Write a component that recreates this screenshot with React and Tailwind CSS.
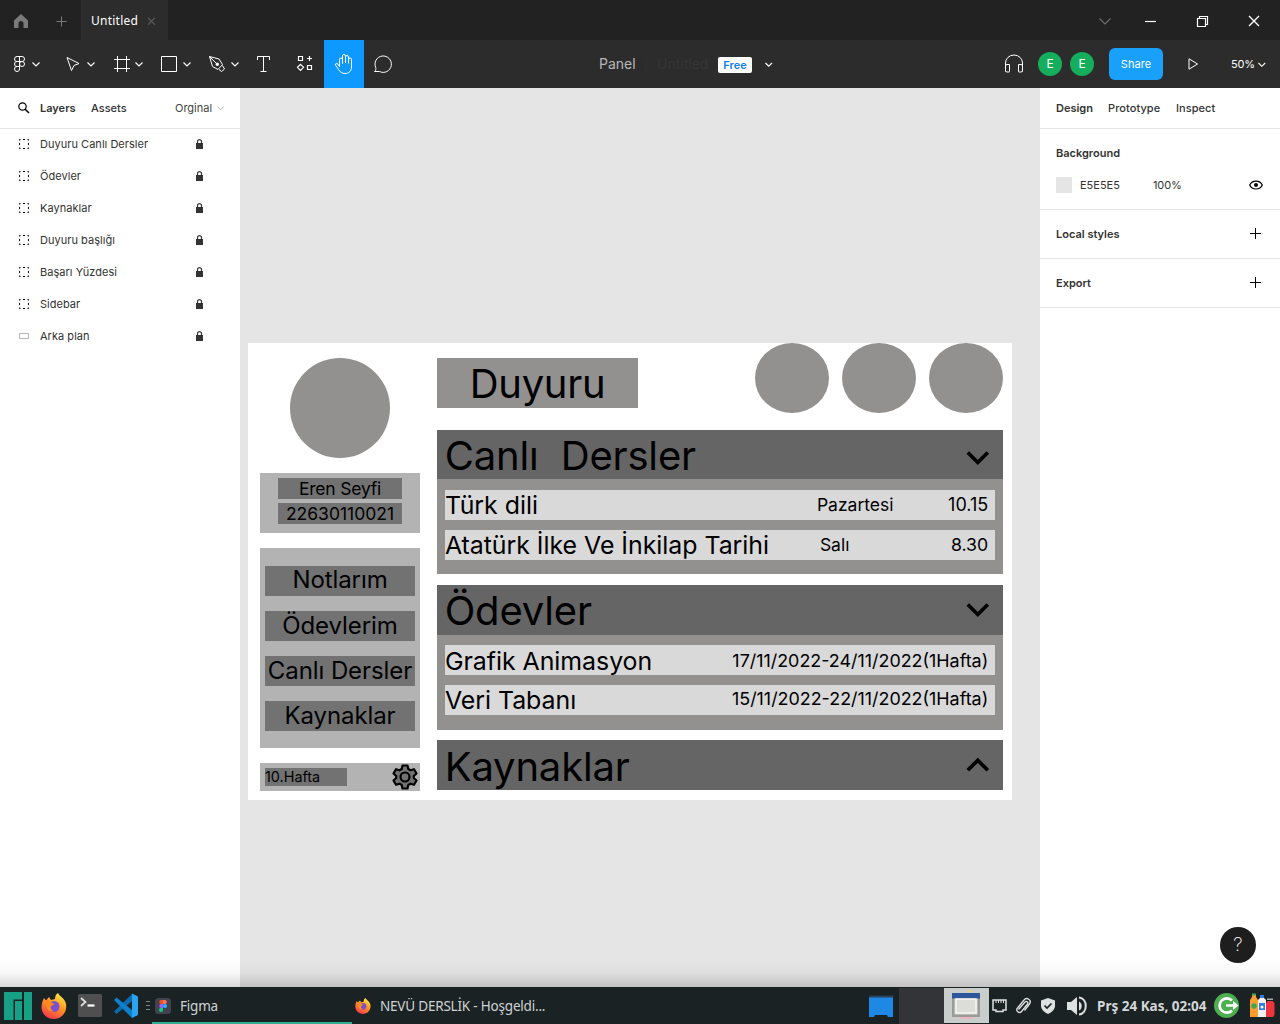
const inter = "font-['Inter','Noto_Sans',sans-serif]";
const noto = "font-['Noto_Sans',sans-serif]";

function Icon({ w, h, className = "", children, stroke = "#fff", sw = 1 }) {
  return (
    <svg width={w} height={h} viewBox={`0 0 ${w} ${h}`} fill="none" stroke={stroke} strokeWidth={sw} className={`block shrink-0 ${className}`}>
      {children}
    </svg>
  );
}

function TitleBar() {
  return (
    <div className={`flex h-10 bg-[#222222] ${noto}`}>
      <div className="flex w-[81px]">
        <Icon w={81} h={40} stroke="none">
          <path d="M21 14l7 6.5V28h-4.500v-4.500a2.500 2.500 0 0 0-5 0V28H14v-7.500z" fill="#7b7b7b" />
          <path d="M61.500 16.500v10M56.500 21.500h10" stroke="#7b7b7b" />
        </Icon>
      </div>
      <div className="flex w-[87px] items-center bg-[#2c2c2c] pl-[10px]">
        <span className="mt-px w-[56px] text-[12px] leading-4 tracking-[0.25px] text-white">Untitled</span>
        <Icon w={9} h={9} className="mt-[2px]" stroke="#575757" sw={1.3}><path d="M1 .7l7 7M8 .7l-7 7" /></Icon>
      </div>
      <div className="flex-1" />
      <Icon w={200} h={40} sw={1.2}>
        <path d="M19.500 18.500l5.500 5.500 5.500-5.500" stroke="#6e6e6e" strokeWidth="1.200" />
        <path d="M65 21.500h11" />
        <path d="M117.500 18.500h8v8h-8zM119.500 18.500v-2h8v8h-2" />
        <path d="M169 16l10 10M179 16l-10 10" strokeWidth="1.400" />
      </Icon>
    </div>
  );
}

const chev = (x) => <path d={`M${x - 3.5} 62.500l3.500 3.500 3.500-3.500`} strokeWidth="1.100" />;

function Tool({ x, w, active, children }) {
  return (
    <button className={`block h-12 shrink-0 ${active ? "bg-[#0d99ff]" : ""}`}>
      <svg width={w} height="48" viewBox={`${x} 40 ${w} 48`} fill="none" stroke="#fff" className="block">{children}</svg>
    </button>
  );
}

function Toolbar() {
  return (
    <div className={`flex h-12 items-center bg-[#2c2c2c] text-white ${inter}`}>
      <div className="flex w-[599px]">
        <Tool x={0} w={52}>
          <path d="M19.500 56.500h-2.500a2.500 2.500 0 0 0 0 5h2.500zM19.500 56.500h2.500a2.500 2.500 0 0 1 0 5h-2.500zM19.500 61.500h-2.500a2.500 2.500 0 0 0 0 5h2.500zM19.500 66.500h-2.500a2.500 2.500 0 1 0 2.500 2.500z" />
          <circle cx="22" cy="64" r="2.500" />
          {chev(36)}
        </Tool>
        <Tool x={52} w={48}>
          <path d="M67 57.500l4.500 13 2.500-5 5-2z" strokeLinejoin="round" />
          {chev(91)}
        </Tool>
        <Tool x={100} w={48}>
          <path d="M117.500 56v16M126.500 56v16M114 59.500h16M114 68.500h16" />
          {chev(139)}
        </Tool>
        <Tool x={148} w={48}>
          <path d="M161.500 56.500h15v15h-15z" />
          {chev(187)}
        </Tool>
        <Tool x={196} w={48}>
          <path d="M209.500 56.500l9.500 2.500 3.500 5.500-4.500 5-5.500-3zM209.500 56.500l7 7M219 69.500l2.500 2 3-2.500-2-3.500" strokeLinejoin="round" />
          <circle cx="217.300" cy="64.300" r="1.300" fill="#fff" />
          {chev(235)}
        </Tool>
        <Tool x={244} w={40}>
          <path d="M257.500 60v-3.500h12v3.500M263.500 56.500v15M260.500 71.500h6" />
        </Tool>
        <Tool x={284} w={40}>
          <path d="M298.500 56.500h4v4h-4zM307.500 65.500h4v4h-4zM309.500 56v5M307 58.500h5M300.500 64.300l3 3-3 3-3-3z" strokeWidth="1.200" />
        </Tool>
        <Tool x={324} w={40} active>
          <path d="M339.500 66.500v-7a1.500 1.500 0 0 1 3 0v4.500M342.500 63.500v-7.500a1.500 1.500 0 0 1 3 0v7M345.500 63v-6a1.500 1.500 0 0 1 3 0v6.500M348.500 63v-3.500a1.500 1.500 0 0 1 3 0V67c0 4-2.500 6.500-6.500 6.500-3 0-5-1.500-6.500-4l-3-4.500c-.6-1.200 1-2.200 2-1.200l2 2.700" strokeLinejoin="round" />
        </Tool>
        <Tool x={364} w={40}>
          <path d="M374.500 71.500c1.500-1.200 1.500-2.500 1.200-4a8.200 8.200 0 1 1 3.800 4z" strokeLinejoin="round" />
        </Tool>
      </div>
      <div className="flex h-5 items-center text-[14px] leading-5">
        <span className="w-[45px] text-[#b8b8b8]">Panel</span>
        <span className="w-[13px] text-[#303030]">/</span>
        <span className="w-[61px] text-[#353535]">Untitled</span>
        <span className="mt-[2px] flex h-4 w-[34px] items-center justify-center rounded-[2px] bg-white text-[11px] font-semibold text-[#0d7fe6]">Free</span>
        <Icon w={9} h={6} className="ml-3 mt-px"><path d="M1.500 1l3.200 3.200L8 1" strokeWidth="1.200" /></Icon>
      </div>
      <div className="flex-1" />
      <div className="flex w-[276px] items-center text-[11px]">
        <Icon w={20} h={20}>
          <path d="M1.500 13V9a8.500 8 0 0 1 17 0v4M1.500 17.500v-5.500q0-1.500 1.500-1.500h2.500v7q0 .500-.500.500H3q-1.500 0-1.500-1.500M18.500 17.500v-5.500q0-1.500-1.500-1.500h-2.500v7q0 .500.500.500h2q1.500 0 1.500-1.500" />
        </Icon>
        <span className="ml-[14px] flex size-6 items-center justify-center rounded-full bg-[#14ae5c] text-[12px]">E</span>
        <span className="ml-2 flex size-6 items-center justify-center rounded-full bg-[#14ae5c] text-[12px]">E</span>
        <span className="ml-[15px] flex h-8 w-[54px] items-center justify-center rounded-md bg-[#18a0fb] tracking-[0.05px]">Share</span>
        <Icon w={12} h={12} className="ml-6"><path d="M2 .8v10.400l8.500-5.200z" /></Icon>
        <span className="ml-8 w-[26px] tracking-[-0.15px]">50%</span>
        <Icon w={9} h={6} className="mt-px"><path d="M1.500 1l3.300 3.300L8.200 1" strokeWidth="1.100" /></Icon>
      </div>
    </div>
  );
}

const layers = ["Duyuru Canlı Dersler", "Ödevler", "Kaynaklar", "Duyuru başlığı", "Başarı Yüzdesi", "Sidebar", "Arka plan"];

function Lock() {
  return (
    <svg width="7" height="10" viewBox="0 0 7 10" className="block">
      <path d="M0 4h7v6H0z" fill="#333" />
      <path d="M1.500 5V2.600a2 2 0 0 1 4 0V5" fill="none" stroke="#333" strokeWidth="1.200" />
    </svg>
  );
}

function LeftPanel() {
  return (
    <aside className="w-60 shrink-0 bg-white text-[11px] text-[#333333]">
      <div className="flex h-[41px] items-center border-b border-[#e5e5e5] pl-[18px]">
        <Icon w={12} h={12} stroke="#000" sw={1.2}><circle cx="4.500" cy="4.500" r="3.700" /><path d="M7.200 7.200L11 11" strokeWidth="1.500" /></Icon>
        <span className="ml-[10px] w-[51px] font-semibold">Layers</span>
        <span className="w-[84px] font-medium">Assets</span>
        <span className="w-[42px] text-[#444]">Orginal</span>
        <Icon w={7} h={5} stroke="#b3b3b3"><path d="M.5.700l3 3 3-3" /></Icon>
      </div>
      <div className="-mt-px">
        {layers.map((n, i) => (
          <div key={n} className="flex h-8 items-center pl-[18px]">
            {i < 6 ? (
              <Icon w={12} h={12} stroke="#000">
                <path d="M1.500 2.500V1.500H2.500M5 1.500h2M9.500 1.500h1V2.500M10.500 5v2M10.500 9.500v1H9.500M7 10.500H5M2.500 10.500h-1V9.500M1.500 7V5" />
              </Icon>
            ) : (
              <Icon w={12} h={12} stroke="#b3b3b3"><path d="M1.500 3.500h9v5h-9z" /></Icon>
            )}
            <span className="ml-[10px] w-[156px] tracking-[0.03px]">{n}</span>
            <Lock />
          </div>
        ))}
      </div>
    </aside>
  );
}

function RightPanel() {
  return (
    <aside className="w-60 shrink-0 bg-white text-[11px] text-[#333333]">
      <div className="flex h-[41px] items-center border-b border-[#e5e5e5] pl-4">
        <span className="w-[52px] font-semibold">Design</span>
        <span className="w-[68px] font-medium tracking-[0.07px]">Prototype</span>
        <span className="font-medium tracking-[0.05px]">Inspect</span>
      </div>
      <div className="h-[81px] border-b border-[#e5e5e5] pl-4 pt-2">
        <div className="flex h-8 items-center font-semibold">Background</div>
        <div className="flex h-8 items-center">
          <div className="size-4 bg-[#e5e5e5]" />
          <span className="ml-2 w-[73px]">E5E5E5</span>
          <span className="w-[96px] tracking-[-0.1px]">100%</span>
          <Icon w={14} h={10} stroke="#000" sw={1.2}><path d="M.7 5C3-.3 11-.3 13.300 5 11 10.300 3 10.300.7 5z" /><circle cx="7" cy="5" r="2" fill="#000" stroke="none" /></Icon>
        </div>
      </div>
      {["Local styles", "Export"].map((t) => (
        <div key={t} className="flex h-[49px] items-center justify-between border-b border-[#e5e5e5] pl-4 pr-[19px] font-semibold">
          {t}
          <Icon w={11} h={11} stroke="#000" className="mb-[2px]"><path d="M5.500 0v11M0 5.500h11" /></Icon>
        </div>
      ))}
    </aside>
  );
}

function Chevron({ up, className = "" }) {
  return (
    <svg width="24" height="16" viewBox="0 0 24 16" fill="none" stroke="#000" strokeWidth="3.700" className={`block ${className}`}>
      <path d={up ? "M1.800 13.300L11.800 3.300 21.800 13.300" : "M1.800 2.500L11.800 12.500 21.800 2.500"} />
    </svg>
  );
}

function SectionHead({ title, up, height = "h-[50px]", textPad = "", chevronPad = "" }) {
  return (
    <div className={`flex ${height} items-center bg-[#656565] pl-[7.300px] pr-[13px] text-[40px] leading-[48px] tracking-[-0.17px]`}>
      <span className={`flex-1 whitespace-pre ${textPad}`}>{title}</span>
      <Chevron up={up} className={chevronPad} />
    </div>
  );
}

const row = "flex h-[30px] items-center bg-[#d9d9d9] pr-[7px] leading-[30px] whitespace-nowrap";
const name = "pt-px tracking-[-0.03px]";
const menuItems = ["Notlarım", "Ödevlerim", "Canlı Dersler", "Kaynaklar"];

function Artboard() {
  return (
    <div className="ml-[8px] mt-[254.500px] flex h-[457.500px] w-[763.500px] bg-white text-black">
      <div className="ml-3 w-40 pt-[15.500px]">
        <div className="mx-auto size-[100px] rounded-full bg-[#929190]" />
        <div className="mt-[15px] flex h-[60px] flex-col items-center bg-[#b3b3b3] pt-[4.500px] text-[17.500px]">
          <div className="flex h-[21px] w-[124px] items-center justify-center bg-[#727272] pt-[2px] tracking-[-0.2px]">Eren Seyfi</div>
          <div className="mt-1 flex h-[21px] w-[124px] items-center justify-center bg-[#727272] pt-[2px]">22630110021</div>
        </div>
        <div className="mt-[15px] flex h-[200px] flex-col gap-[15px] bg-[#b3b3b3] px-[5px] pt-[17.500px] text-[24px] tracking-[-0.08px]">
          {menuItems.map((m, i) => (
            <div key={m} className={`flex h-[30px] items-center justify-center whitespace-nowrap bg-[#727272] ${i === 0 ? "pb-[2px]" : ""}`}>{m}</div>
          ))}
        </div>
        <div className="mt-[15px] flex h-[27.500px] items-center justify-between bg-[#b3b3b3] pl-[5px] pr-[2px]">
          <div className="flex h-[17.500px] w-[82px] items-center bg-[#727272] text-[14.400px]">10.Hafta</div>
          <svg width="26" height="26" viewBox="0 0 26 26" fill="#727272" stroke="#000" strokeWidth="2.200" strokeLinejoin="round">
            <path d="M10.500 1.500h5l.8 3.500 2.200 1.300 3.500-1.100 2.500 4.300-2.700 2.500v2l2.700 2.500-2.500 4.300-3.500-1.100-2.200 1.300-.8 3.500h-5l-.8-3.500-2.200-1.300L4 20.800 1.500 16.500 4.200 14v-2L1.500 9.500 4 5.200l3.500 1.100L9.700 5z" />
            <circle cx="13" cy="13" r="4.500" />
          </svg>
        </div>
      </div>
      <div className="ml-[17.400px] w-[565.300px]">
        <div className="flex h-[87px] justify-between">
          <div className="mt-[15.500px] flex h-[50px] w-[200.300px] items-center justify-center bg-[#929190] pt-[2px] text-[40px] tracking-[-0.3px]">Duyuru</div>
          <div className="flex gap-[13.500px]">
            {[0, 1, 2].map((i) => (
              <div key={i} className="h-[70px] w-[73.500px] rounded-[50%] bg-[#929190]" />
            ))}
          </div>
        </div>
        <div className="h-[144.500px] bg-[#929190]">
          <SectionHead title="Canlı  Dersler" height="h-[49.500px]" textPad="pt-[3px]" chevronPad="mt-[7px]" />
          <div className="mx-[7.500px] mt-[10.500px] flex flex-col gap-[10px] text-[24.900px]">
            <div className={row}><span className={`w-[372px] ${name}`}>Türk dili</span><span className="flex-1 text-[17.500px]">Pazartesi</span><span className="text-[18px]">10.15</span></div>
            <div className={row}><span className={`w-[375px] ${name}`}>Atatürk İlke Ve İnkilap Tarihi</span><span className="flex-1 text-[17.500px]">Salı</span><span className="text-[17.700px]">8.30</span></div>
          </div>
        </div>
        <div className="mt-[11px] h-[145px] bg-[#929190]">
          <SectionHead title="Ödevler" textPad="pt-px" />
          <div className="mx-[7.500px] mt-[10px] flex flex-col gap-[10px] text-[24.900px]">
            <div className={row}><span className={`flex-1 ${name}`}>Grafik Animasyon</span><span className="pt-px text-[17.900px]">17/11/2022-24/11/2022(1Hafta)</span></div>
            <div className={row}><span className="flex-1 tracking-[-0.03px]">Veri Tabanı</span><span className="pb-[2px] text-[17.900px]">15/11/2022-22/11/2022(1Hafta)</span></div>
          </div>
        </div>
        <div className="mt-[10px]"><SectionHead title="Kaynaklar" up textPad="pt-[4px]" /></div>
      </div>
    </div>
  );
}

function Firefox({ size }) {
  return (
    <svg width={size} height={size} viewBox="0 0 26 26" className="block shrink-0">
      <defs>
        <linearGradient id="fx" x1="0.800" y1="0" x2="0.300" y2="1">
          <stop offset="0" stopColor="#fff04a" /><stop offset=".45" stopColor="#ff9a1f" /><stop offset="1" stopColor="#f4364f" />
        </linearGradient>
      </defs>
      <path d="M17 0c1 3 7 5 8 11 1.500 8-4.500 15-12 15S.5 20.500.5 14C.5 10 2 7 3 5l2 2.500L8 4l2 3 4-1c0-3 1-5 3-6z" fill="url(#fx)" />
      <circle cx="13" cy="13.500" r="5.500" fill="#7a4fd0" />
      <path d="M2 8c4-2 7-1 9 2l3 1-4 2c-1 3 1 5 4 5-6 2-10-3-8-8z" fill="#ff8a1c" />
    </svg>
  );
}

function Taskbar() {
  return (
    <footer className={`flex h-[37px] shrink-0 items-center bg-[#1b2224] ${noto}`}>
      <svg width="152" height="37" viewBox="0 987 152 37" className="block shrink-0">
        <path d="M4 992h18v7.500h-8.500v20.500H4zM15 1001h7v19h-7zM24 992h8v28h-8z" fill="#16a085" />
        <g transform="translate(41 993)"><Firefox size={26} /></g>
        <rect x="78" y="994" width="24" height="23" rx="1.500" fill="#4f4f4f" />
        <path d="M81 998l4.500 4-4.500 4" fill="none" stroke="#ddd" strokeWidth="1.800" />
        <path d="M87.500 1005.500h7" stroke="#fff" strokeWidth="2.200" />
        <path d="M114 1011.500l2.500 2.500L132 1001v-7z" fill="#0a6cb0" />
        <path d="M114 1000l2.500-2.500L132 1010v8z" fill="#0f80cc" />
        <path d="M132 993.500l6 3v18.500l-6 3z" fill="#2aa3f0" />
        <path d="M146 1001.500h4M146 1005.500h4M146 1009.500h4" stroke="#7f8587" />
      </svg>
      <div className="flex h-[37px] w-[200px] items-center border-b-2 border-[#2fae95] pl-[3px] pt-[2px] text-[13.500px] text-[#cfd3d3]">
        <svg width="16" height="16" viewBox="0 0 16 16">
          <rect width="16" height="16" rx="3.500" fill="#43434f" />
          <path d="M8 2H6.200a2 2 0 0 0 0 4H8z" fill="#f24e1e" /><path d="M8 2h1.800a2 2 0 0 1 0 4H8z" fill="#ff7262" />
          <path d="M8 6H6.200a2 2 0 0 0 0 4H8z" fill="#a259ff" /><circle cx="10" cy="8" r="2" fill="#1abcfe" />
          <path d="M8 10H6.200a2 2 0 1 0 1.800 2z" fill="#0acf83" />
        </svg>
        <span className="ml-[9px] pt-[2px] tracking-[-0.2px]">Figma</span>
      </div>
      <div className="flex w-[516px] items-center pl-[3px] text-[13.500px] text-[#cfd3d3]">
        <Firefox size={16} />
        <span className="ml-[9px] pt-[2px] tracking-[-0.2px]">NEVÜ DERSLİK - Hoşgeldi...</span>
      </div>
      <svg width="226" height="37" viewBox="868 987 226 37" fill="none" className="block shrink-0">
        <path d="M869 996h24v21h-5l-1-2h-12l-1 2h-5z" fill="#1e88e5" />
        <path d="M869 995.500h24v2h-24z" fill="#2b4258" />
        <path d="M899 988h45v36h-45z" fill="#323437" />
        <path d="M944 988h45v35h-45z" fill="#c9cecc" />
        <path d="M967 992l3-2 3 2z" fill="#ead66b" />
        <path d="M952 993h28v24h-28z" fill="#9b9b99" />
        <path d="M954.500 995.500h23v19h-23z" fill="#d4d5d1" />
        <path d="M952 993h28v5.500h-28z" fill="#2e5799" />
        <path d="M956 999h20v14h-20z" fill="#dcddd9" stroke="#f5f5f2" strokeWidth="1.500" />
        <path d="M958 1017h16l-5 2h-6z" fill="#efb4bb" />
        <g stroke="#dfe1e1">
          <path d="M993 1000h13v10h-3v1.500h-7V1010h-3z" strokeWidth="1.500" />
          <path d="M996 1000v3M998.500 1000v3M1001 1000v3M1003.500 1000v3" />
          <path d="M1018.500 1009.500l6.500-7.500a1.500 1.500 0 0 1 2.500 2l-6 7.500a2.500 2.500 0 0 1-4-3.500l6.500-8a3.300 3.300 0 0 1 5.500 4l-5 6.500" strokeWidth="1.300" />
        </g>
        <path d="M1048 998l7 2.500v5c0 4-3 6.500-7 8.500-4-2-7-4.500-7-8.500v-5z" fill="#dfe1e1" />
        <path d="M1044.500 1005.500l2.500 2.500 4.500-4.500" stroke="#1b2224" strokeWidth="1.700" />
        <path d="M1067 1002h4l6-5v18l-6-5h-4z" fill="#dfe1e1" />
        <path d="M1079 1001.500a5 5 0 0 1 0 9z" fill="#dfe1e1" />
        <path d="M1079 997.500c9 1 9 16 0 17" stroke="#dfe1e1" strokeWidth="2" />
      </svg>
      <span className="ml-[3px] w-[117px] whitespace-nowrap pt-[2px] text-[13.500px] font-bold text-[#d3d7d7]">Prş 24 Kas, 02:04</span>
      <svg width="66" height="37" viewBox="1214 987 66 37" fill="none" className="block shrink-0">
        <circle cx="1226.500" cy="1005.500" r="12.500" fill="#4caf50" />
        <path d="M1232 1000.500a7.200 7.200 0 1 0 0 10M1226 1005.500h9" stroke="#fff" strokeWidth="2.700" />
        <path d="M1233 1001l5.500 4.500-5.500 4.500z" fill="#fff" />
        <path d="M1252 994h4v3l2 3v17h-8v-17l2-3z" fill="#ff9d2e" /><path d="M1252 993.500h4v2h-4z" fill="#38a858" /><circle cx="1254" cy="1006" r="2.700" fill="#38a858" />
        <path d="M1260 995h4v3l2 2v17h-8v-17l2-2z" fill="#f2f2f2" /><path d="M1260 995h4v3h-4zM1259 1003h6v7h-6z" fill="#2f7de0" /><circle cx="1262" cy="1007" r="1.500" fill="#fff" />
        <path d="M1266 1003l1.500-2h5l2 2v12l-1.500 2h-7z" fill="#ee343d" /><path d="M1267 998.500h6v1.500h-6z" fill="#aaa" />
      </svg>
    </footer>
  );
}

export default function App() {
  return (
    <div className="flex h-[1024px] w-[1280px] flex-col overflow-hidden bg-[#e5e5e5]">
      <TitleBar />
      <Toolbar />
      <main className={`relative flex min-h-0 flex-1 ${inter}`}>
        <LeftPanel />
        <div className="w-[800px]"><Artboard /></div>
        <RightPanel />
        <div className="absolute bottom-0 left-0 h-7 w-full bg-gradient-to-t from-black/15 via-black/3 to-transparent" />
        <button className="absolute right-6 top-[839px] flex size-9 items-center justify-center rounded-full bg-[#1e1e1e] text-[19px] font-extralight text-white">?</button>
      </main>
      <Taskbar />
    </div>
  );
}
